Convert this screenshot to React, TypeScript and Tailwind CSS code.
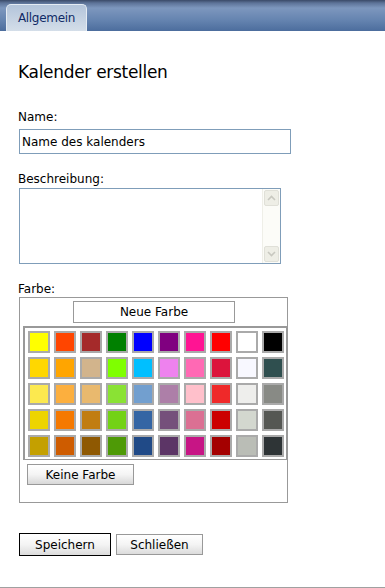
import React from "react";

const rows: string[][] = [
  ["#ffff00", "#ff4500", "#a52a2a", "#008000", "#0000ff", "#800080", "#ff1493", "#ff0000", "#ffffff", "#000000"],
  ["#ffd700", "#ffa500", "#d2b48c", "#7fff00", "#00bfff", "#ee82ee", "#ff69b4", "#dc143c", "#f8f8ff", "#2f4f4f"],
  ["#fce94f", "#fcaf3e", "#e9b96e", "#8ae234", "#729fcf", "#ad7fa8", "#ffc0cb", "#ef2929", "#eeeeec", "#888a85"],
  ["#edd400", "#f57900", "#c17d11", "#73d216", "#3465a4", "#75507b", "#db7093", "#cc0000", "#d3d7cf", "#555753"],
  ["#c4a000", "#ce5c00", "#8f5902", "#4e9a06", "#204a87", "#5c3566", "#c71585", "#a40000", "#babdb6", "#2e3436"],
];

export default function App() {
  return (
    <div
      className="w-[385px] h-[588px] bg-white relative overflow-hidden text-[12px] text-black"
      style={{ fontFamily: '"DejaVu Sans", Verdana, sans-serif' }}
    >
      {/* header */}
      <div className="h-[31px] bg-[linear-gradient(to_bottom,#3a4a68_0px,#5d7398_3px,#7d97be_8px,#6584b0_20px,#4c6d9d_31px)] flex items-end pl-[6px]">
        <div className="h-[27px] w-[81px] rounded-t-[5px] border border-b-0 border-[#e4ebf3] bg-[linear-gradient(to_bottom,#b3c4da,#d4dee9)] flex items-center justify-center text-[12px] text-[#0f2a66] tracking-[-0.3px]">
          Allgemein
        </div>
      </div>

      <div className="pl-[19px]">
        <div className="mt-[31px] h-[20px] leading-[20px] text-[17px] -ml-[1px] tracking-[-0.3px]">Kalender erstellen</div>

        <div className="mt-[28px] h-[15px] leading-[15px] -ml-[1px]">Name:</div>
        <div className="mt-[4px] w-[272px] h-[25px] border border-[#7f9db9] flex items-center pl-[2px]">
          Name des kalenders
        </div>

        <div className="mt-[18px] h-[15px] leading-[15px] -ml-[1px]">Beschreibung:</div>
        <div className="mt-[1px] w-[262px] h-[76px] border border-[#7f9db9] flex justify-end">
          <div className="w-[18px] h-full bg-[#fcfcf8] border-l border-[#efefe8] flex flex-col justify-between py-[1px] pr-[1px] pl-[1px]">
            <div className="h-[16px] rounded-[2px] border border-[#e0e0d8] bg-[#eeeee6] flex items-center justify-center">
              <svg width="9" height="6" viewBox="0 0 9 6"><path d="M1 5 L4.5 1.5 L8 5" stroke="#c8c8c0" strokeWidth="1.6" fill="none" /></svg>
            </div>
            <div className="h-[16px] rounded-[2px] border border-[#e0e0d8] bg-[#eeeee6] flex items-center justify-center">
              <svg width="9" height="6" viewBox="0 0 9 6"><path d="M1 1 L4.5 4.5 L8 1" stroke="#c8c8c0" strokeWidth="1.6" fill="none" /></svg>
            </div>
          </div>
        </div>

        <div className="mt-[18px] h-[15px] leading-[15px] -ml-[1px]">Farbe:</div>
        <div className="w-[269px] h-[206px] border border-[#999999] pt-[3px] pl-[3px]">
          <div className="ml-[50px] w-[162px] h-[22px] border border-[#999999] flex items-center justify-center">
            Neue Farbe
          </div>
          <div className="mt-[3px] w-[264px] h-[134px] border-2 border-r-[1px] border-b-[1px] border-[#999999] pt-[3px] pl-[3px] flex flex-col gap-[4px]">
            {rows.map((r, i) => (
              <div key={i} className="flex gap-[4px]">
                {r.map((c, j) => (
                  <div key={j} className="w-[22px] h-[22px] border-2 border-[#aaaaaa]" style={{ backgroundColor: c }} />
                ))}
              </div>
            ))}
          </div>
          <div className="mt-[4px] ml-[4px] w-[107px] h-[21px] border border-[#999999] bg-[linear-gradient(to_bottom,#ffffff,#f4f4f4_50%,#d8d8d8)] flex items-center justify-center">
            Keine Farbe
          </div>
        </div>

        <div className="mt-[30px] flex items-center gap-[5px]">
          <div className="w-[92px] h-[23px] border border-black bg-[linear-gradient(to_bottom,#ffffff,#f4f4f4_50%,#dcdcdc)] flex items-center justify-center">
            Speichern
          </div>
          <div className="w-[87px] h-[21px] border border-[#999999] bg-[linear-gradient(to_bottom,#ffffff,#f4f4f4_50%,#dcdcdc)] flex items-center justify-center">
            Schließen
          </div>
        </div>
      </div>

      <div className="absolute left-0 right-0 bottom-0 h-[1px] bg-[#a0a0a0]" />
    </div>
  );
}
